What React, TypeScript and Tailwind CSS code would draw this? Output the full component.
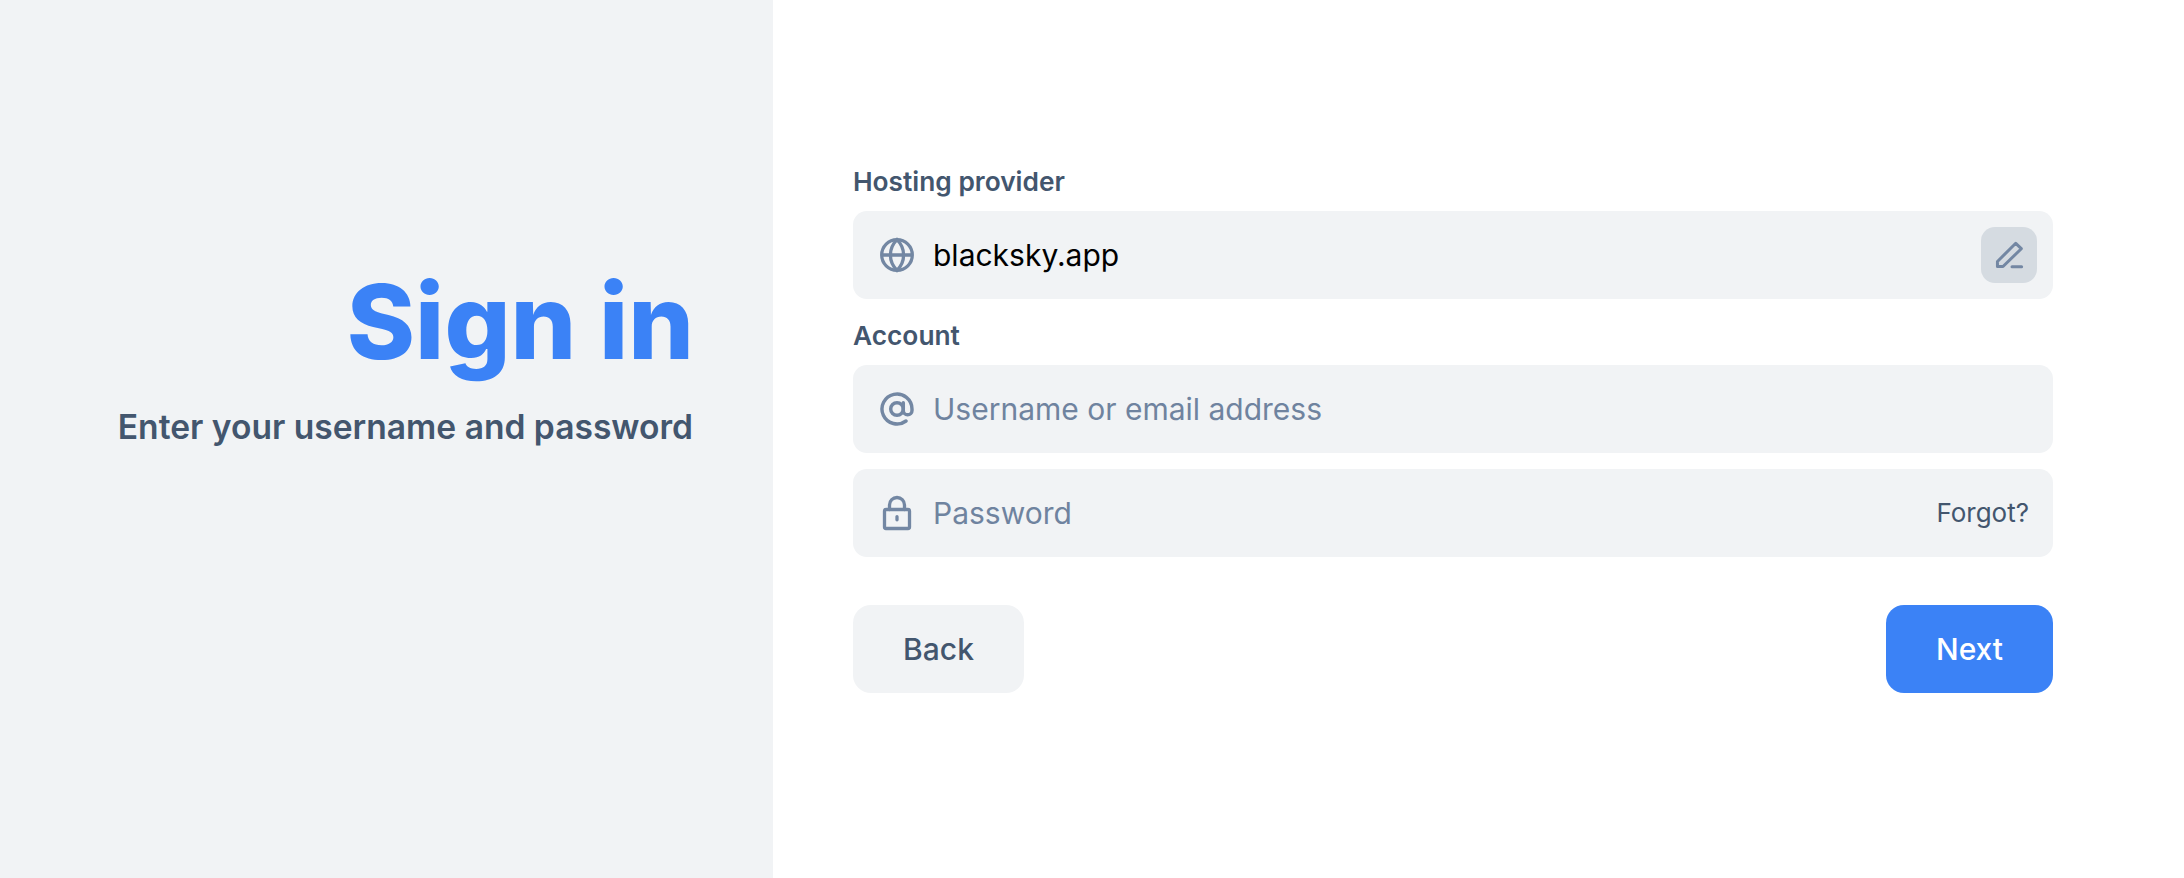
import React from "react";

function Field({ icon, children, right }: { icon: React.ReactNode; children: React.ReactNode; right?: React.ReactNode }) {
  return (
    <div className="flex h-[88px] items-center rounded-[14px] bg-[#f1f3f5] pl-[26px] pr-4">
      <div className="flex h-[36px] w-[36px] shrink-0 items-center justify-center text-[#7387a3]">{icon}</div>
      <div className="ml-[18px] flex-1 text-[30px] leading-none">{children}</div>
      {right}
    </div>
  );
}

export default function App() {
  return (
    <div className="flex h-[878px] w-[2184px] bg-white font-['Inter',sans-serif]">
      <div className="flex w-[773px] shrink-0 flex-col items-end bg-[#f1f3f5] pr-[80px] pt-[258px]">
        <h1 className="mr-[-1px] text-[103.5px] leading-[128px] font-extrabold text-[#3b82f6]">Sign in</h1>
        <p className="mt-[21px] text-[33.6px] leading-[40px] font-semibold text-[#43566e]">Enter your username and password</p>
      </div>
      <div className="flex flex-1 flex-col pl-[80px] pr-[131px] pt-[166px]">
        <label className="mb-[13px] text-[26.3px] leading-[32px] font-semibold text-[#43566e]">Hosting provider</label>
        <Field
          icon={
            <svg width="36" height="36" viewBox="0 0 24 24" fill="none" stroke="currentColor" strokeWidth="2.2">
              <circle cx="12" cy="12" r="10.2" />
              <path d="M1.8 12h20.4M12 1.8c3 3 4.4 6.6 4.4 10.2s-1.4 7.2-4.4 10.2c-3-3-4.4-6.6-4.4-10.2s1.4-7.2 4.4-10.2z" />
            </svg>
          }
          right={
            <div className="flex h-[56px] w-[56px] items-center justify-center rounded-[14px] bg-[#d5dbe1] text-[#7387a3]">
              <svg width="36" height="36" viewBox="0 0 24 24" fill="none" stroke="currentColor" strokeWidth="2" strokeLinecap="round" strokeLinejoin="round">
                <path d="M4.3 19.7V16.3L16.5 4.2L20.2 7.8L8 19.7Z" />
                <path d="M14 19.8H20.4" />
              </svg>
            </div>
          }
        >
          <span className="text-black">blacksky.app</span>
        </Field>
        <label className="mt-[21px] mb-[13px] text-[26.3px] leading-[32px] font-semibold text-[#43566e]">Account</label>
        <Field
          icon={
            <svg width="36" height="36" viewBox="0 0 24 24" fill="none" stroke="currentColor" strokeWidth="2.3" strokeLinecap="round" strokeLinejoin="round">
              <circle cx="12" cy="12" r="4.2" />
              <path d="M16.2 7.8v5.2a2.9 2.9 0 0 0 5.8 0v-1a10 10 0 1 0-4 8" />
            </svg>
          }
        >
          <span className="text-[#6f839f]">Username or email address</span>
        </Field>
        <div className="mt-[16px]">
          <Field
            icon={
              <svg width="36" height="36" viewBox="0 0 24 24" fill="none" stroke="currentColor" strokeWidth="2.2" strokeLinecap="round" strokeLinejoin="round">
                <rect x="3.67" y="9.67" width="16.67" height="12.67" rx="1" />
                <path d="M7 9.67V6.67a5 5 0 0 1 10 0V9.67" />
                <path d="M12 14.5v2" />
              </svg>
            }
            right={<span className="pr-[8px] text-[26px] leading-none text-[#43566e]">Forgot?</span>}
          >
            <span className="text-[#6f839f]">Password</span>
          </Field>
        </div>
        <div className="mt-[48px] flex justify-between">
          <button className="h-[88px] w-[171px] rounded-[18px] bg-[#f1f3f5] text-[30px] font-medium text-[#43566e]">Back</button>
          <button className="h-[88px] w-[167px] rounded-[18px] bg-[#3b82f6] text-[30px] font-medium text-white">Next</button>
        </div>
      </div>
    </div>
  );
}
